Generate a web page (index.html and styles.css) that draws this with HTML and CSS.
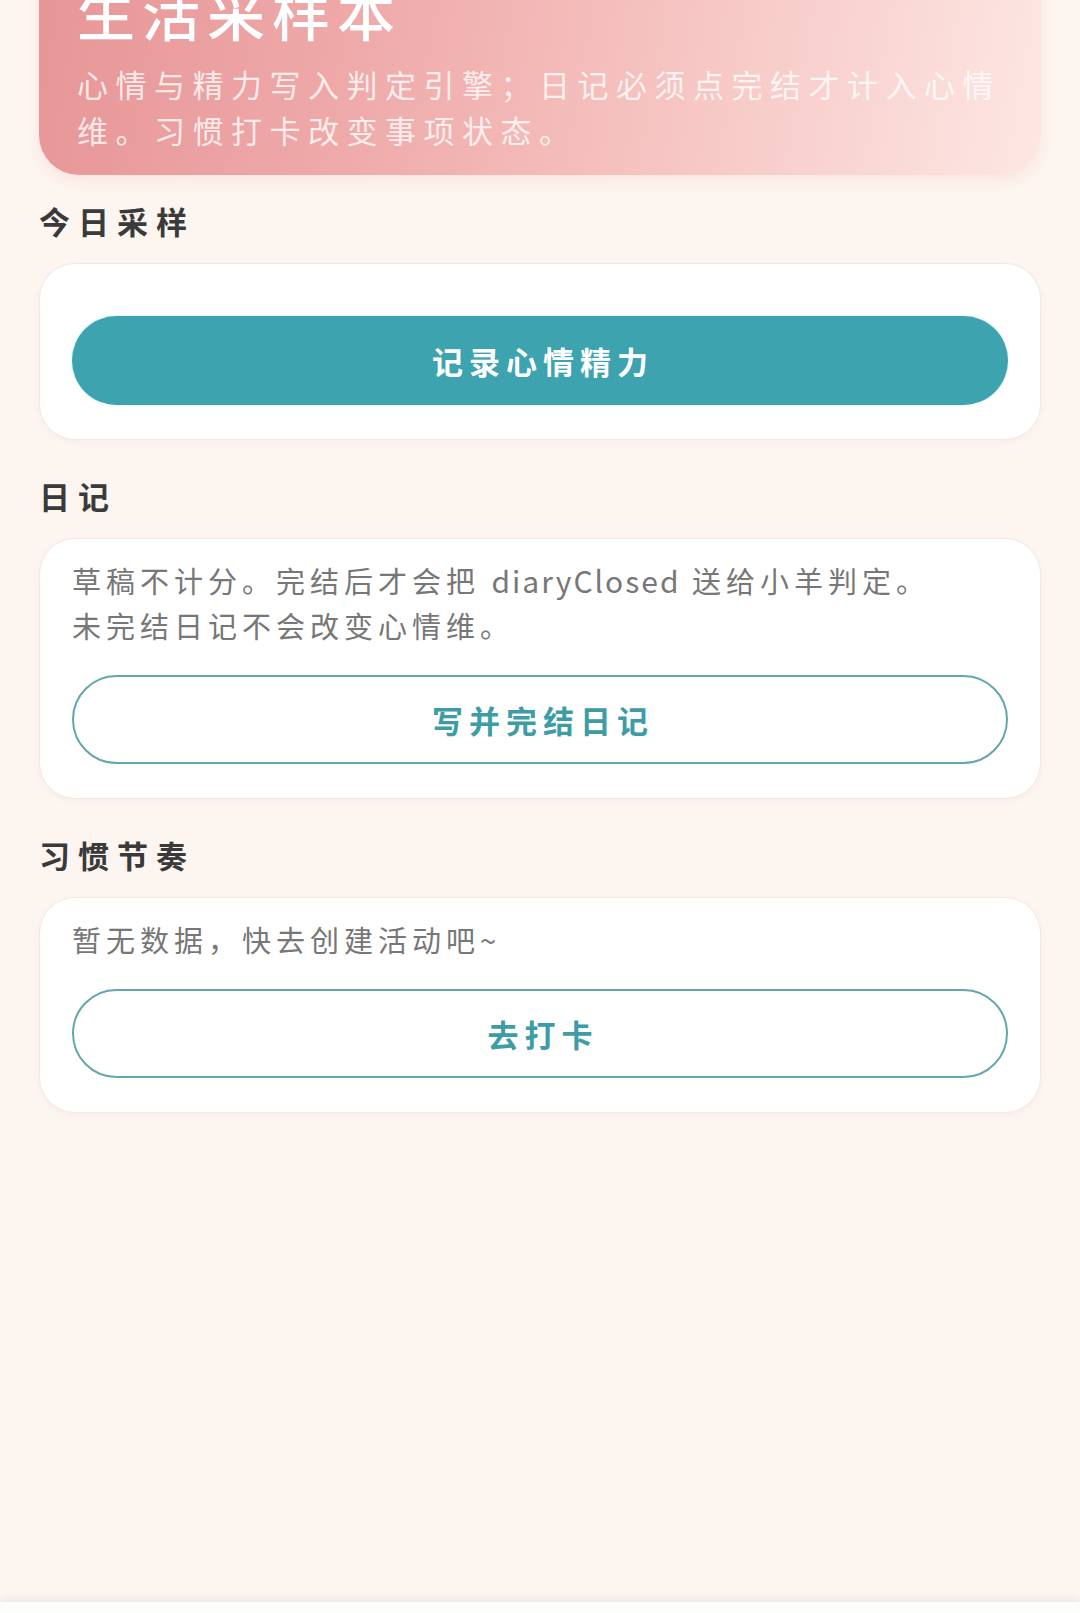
FILE: index.html
```html
<!DOCTYPE html>
<html lang="zh-CN">
<head>
<meta charset="utf-8">
<title>生活采样本</title>
<link rel="stylesheet" href="styles.css">
</head>
<body>
<div class="screen">
  <main class="page">
    <header class="hero">
      <h1 class="hero-title">生活采样本</h1>
      <p class="hero-desc">心情与精力写入判定引擎；日记必须点完结才计入心情维。习惯打卡改变事项状态。</p>
    </header>

    <section class="section section-first">
      <h2 class="section-title">今日采样</h2>
      <div class="card card-sample">
        <button class="btn btn-primary">记录心情精力</button>
      </div>
    </section>

    <section class="section">
      <h2 class="section-title">日记</h2>
      <div class="card">
        <p class="card-text">草稿不计分。完结后才会把 <span class="latin">diaryClosed</span> 送给小羊判定。<br>未完结日记不会改变心情维。</p>
        <button class="btn btn-outline">写并完结日记</button>
      </div>
    </section>

    <section class="section">
      <h2 class="section-title">习惯节奏</h2>
      <div class="card">
        <p class="card-text">暂无数据，快去创建活动吧~</p>
        <button class="btn btn-outline">去打卡</button>
      </div>
    </section>
  </main>
  <footer class="tabbar"></footer>
</div>
</body>
</html>
```

FILE: styles.css
```css
* {
  box-sizing: border-box;
}

html, body {
  margin: 0;
  padding: 0;
}

body {
  background: #fdf5f0;
  font-family: "Noto Sans CJK SC", "Noto Sans", sans-serif;
  color: #333;
  overflow: hidden;
}

.screen {
  height: 1613px;
  display: flex;
  flex-direction: column;
}

.page {
  flex: 1;
  padding: 0 39px;
  display: flex;
  flex-direction: column;
}

.hero {
  margin-top: -57px;
  padding: 36px 30px 22px 38px;
  border-radius: 0 0 40px 40px;
  background:
    linear-gradient(100deg, #e79596 0%, #eea8a8 30%, #f4bdbb 55%, #f9d4d1 80%, #fde7e3 100%);
  box-shadow: 0 6px 14px rgba(232, 160, 150, 0.18);
  color: #fff;
}

.hero-title {
  margin: 0;
  font-size: 58px;
  line-height: 64px;
  font-weight: 500;
  letter-spacing: 7px;
  color: #fff;
}

.hero-desc {
  margin: 18px 0 0;
  font-size: 31px;
  line-height: 46px;
  letter-spacing: 7.5px;
  color: rgba(255, 255, 255, 0.8);
}

.section {
  margin-top: 36px;
  display: flex;
  flex-direction: column;
}

.section-first {
  margin-top: 26px;
}

.section-title {
  margin: 0 0 22px;
  font-size: 31px;
  line-height: 40px;
  font-weight: 700;
  letter-spacing: 8px;
  color: #3a3a3a;
}

.card {
  background: #fff;
  border: 1.5px solid #f3e8e2;
  border-radius: 36px;
  padding: 19px 32px 34px;
  box-shadow: 0 2px 6px rgba(220, 190, 175, 0.12);
  display: flex;
  flex-direction: column;
}

.card-sample {
  padding-top: 52px;
}

.card-text {
  margin: 0 0 27px;
  font-size: 29px;
  line-height: 45px;
  letter-spacing: 5px;
  color: #777;
}

.latin {
  letter-spacing: 2px;
  font-size: 30px;
}

.btn {
  height: 89px;
  border-radius: 45px;
  font-family: inherit;
  font-size: 31px;
  font-weight: 700;
  letter-spacing: 6px;
  padding: 0 0 0 6px;
  cursor: pointer;
}

.btn-primary {
  background: #3ca3af;
  border: none;
  color: #fff;
  box-shadow: 0 0 2px rgba(120, 220, 230, 0.6);
}

.btn-outline {
  background: #fff;
  border: 2.5px solid #62a7aa;
  color: #3d9ca5;
}

.tabbar {
  height: 11px;
  background: #fdfdfb;
  box-shadow: 0 -3px 6px rgba(200, 190, 180, 0.25);
}
```
